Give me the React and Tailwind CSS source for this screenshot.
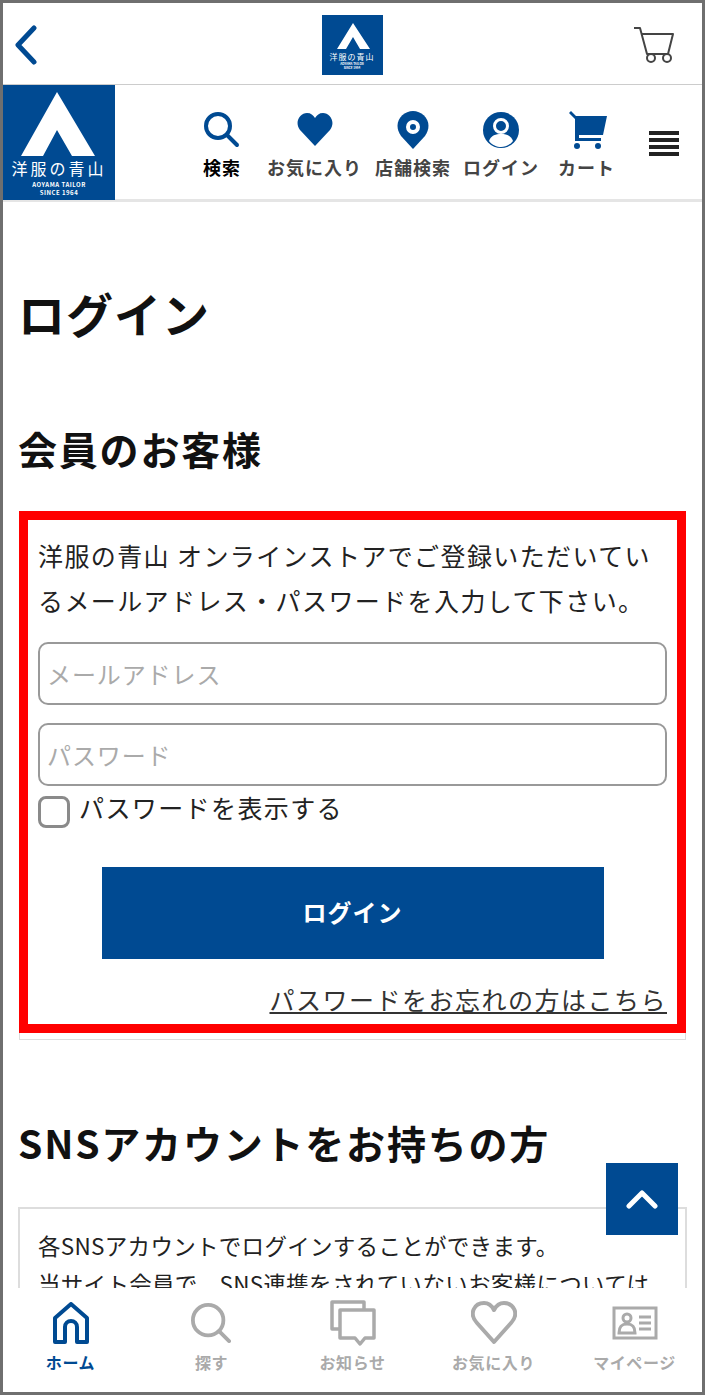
import React from "react";

const font = { fontFamily: '"Noto Sans CJK JP", "Noto Sans", sans-serif' };

function SearchIcon() {
  return (
    <svg width="36" height="36" viewBox="0 0 36 36" fill="none" stroke="#004a92" strokeWidth="4" strokeLinecap="round">
      <circle cx="14" cy="14" r="12" />
      <path d="M23 23l10 10" />
    </svg>
  );
}

function HeartIcon() {
  return (
    <svg width="36" height="34" viewBox="0 0 36 34" fill="#004a92">
      <path d="M18 33L3 17C-3 9 3 0 10 0c4 0 6 2 8 5 2-3 4-5 8-5 7 0 13 9 7 17z" />
    </svg>
  );
}

function PinIcon() {
  return (
    <svg width="32" height="38" viewBox="0 0 32 38">
      <path d="M16 38L4 25C-5 12 5 0 16 0s21 12 12 25z" fill="#004a92" />
      <circle cx="16" cy="16" r="5" fill="none" stroke="#fff" strokeWidth="4" />
    </svg>
  );
}

function UserIcon() {
  return (
    <svg width="36" height="36" viewBox="0 0 36 36">
      <circle cx="18" cy="18" r="18" fill="#004a92" />
      <circle cx="18" cy="14" r="6.5" fill="#004a92" stroke="#fff" strokeWidth="3" />
      <path d="M6 29c2-6 7-7 12-7s10 1 12 7c-3 4-8 6-12 6s-9-2-12-6z" fill="#fff" />
    </svg>
  );
}

function CartIcon() {
  return (
    <svg width="38" height="38" viewBox="0 0 38 38" fill="#004a92" className="ml-[3px]">
      <path d="M0 2l2-2 5 5h31l-4 19H10v3h22v3H6V8z" />
      <circle cx="8" cy="35" r="3" />
      <circle cx="29" cy="35" r="3" />
    </svg>
  );
}

const navItems = [
  { label: "検索", icon: <SearchIcon />, ml: "ml-[88px]", active: true },
  { label: "お気に入り", icon: <HeartIcon />, ml: "ml-[26px]" },
  { label: "店舗検索", icon: <PinIcon />, ml: "ml-[13px]" },
  { label: "ログイン", icon: <UserIcon />, ml: "ml-[12px]" },
  { label: "カート", icon: <CartIcon />, ml: "ml-[19px]" },
];

function BottomIcon({ name, color }) {
  if (name === "home")
    return (
      <svg width="36" height="42" viewBox="0 0 36 42" fill="none" stroke={color} strokeWidth="4" strokeLinejoin="round">
        <path d="M2 16L18 2l16 14v24H24V25a6 6 0 00-12 0v15H2z" />
      </svg>
    );
  if (name === "search")
    return (
      <svg width="40" height="40" viewBox="0 0 42 42" fill="none" stroke={color} strokeWidth="4" strokeLinecap="round" className="-ml-[2px]">
        <circle cx="18" cy="18" r="16" />
        <path d="M30 30l10 10" />
      </svg>
    );
  if (name === "news")
    return (
      <svg width="46" height="46" viewBox="0 0 46 46" fill="none" stroke={color} strokeWidth="3.5" strokeLinejoin="round">
        <path d="M10 29H2V2h32v8" />
        <path d="M10 10h34v28h-9l-5 6-5-6H10z" />
      </svg>
    );
  if (name === "heart")
    return (
      <svg width="46" height="44" viewBox="0 0 46 44" fill="none" stroke={color} strokeWidth="4" strokeLinejoin="round">
        <path d="M23 41L6 22C-3 12 4 2 13 2c5 0 8 3 10 7 2-4 5-7 10-7 9 0 16 10 7 20z" />
      </svg>
    );
  return (
    <svg width="46" height="34" viewBox="0 0 46 34" fill="none" stroke={color} strokeWidth="3">
      <rect x="2" y="2" width="42" height="30" />
      <circle cx="15" cy="12" r="4" />
      <path d="M7 27c0-7 3-9 8-9s8 2 8 9z" />
      <path d="M27 11h12M27 17h12M27 23h12" />
    </svg>
  );
}

const bottomItems = [
  { label: "ホーム", name: "home", active: true },
  { label: "探す", name: "search" },
  { label: "お知らせ", name: "news" },
  { label: "お気に入り", name: "heart" },
  { label: "マイページ", name: "card" },
];

export default function App() {
  return (
    <div style={font} className="relative w-[705px] h-[1395px] overflow-hidden bg-white border-[3px] border-[#6f6f6f] text-[#111]">
      {/* top bar */}
      <div className="flex items-center justify-between h-[82px] border-b border-[#ccc] pt-[2px] pl-[11px] pr-[26px]">
        <svg width="24" height="40" viewBox="0 0 24 40" fill="none" stroke="#004a92" strokeWidth="5" strokeLinecap="round" strokeLinejoin="round">
          <path d="M20 3L4 20l16 17" />
        </svg>
        <div className="relative w-[61px] h-[60px] bg-[#004a92] ml-[34px] overflow-hidden flex flex-col items-center">
          <svg width="61" height="38" viewBox="0 0 61 38" className="shrink-0">
            <polygon points="31,8 48,34 38,34 31,22 24,34 15,34" fill="#fff" />
          </svg>
          <span className="text-[8px] leading-[10px] text-white tracking-[1px] -mt-[1px] whitespace-nowrap">洋服の青山</span>
          <span className="text-[3px] leading-[4px] text-white text-center font-bold">
            AOYAMA TAILOR
            <br />
            SINCE 1964
          </span>
        </div>
        <svg width="44" height="38" viewBox="0 0 44 38" fill="none" stroke="#444" strokeWidth="2" strokeLinejoin="round">
          <path d="M2 2h6l7 26h21l5-20H10" />
          <circle cx="19" cy="32" r="4" />
          <circle cx="35" cy="32" r="4" />
        </svg>
      </div>

      {/* site header */}
      <div className="flex h-[117px] border-b-[3px] border-[#e5e5e5]">
        <div className="relative w-[112px] h-[115px] bg-[#004a92] shrink-0">
          <svg viewBox="0 0 112 115" className="absolute inset-0 w-full h-full">
            <polygon points="54,7 92,71 69,71 54,45 40,71 18,71" fill="#fff" />
          </svg>
          <div className="absolute top-[70px] inset-x-0 text-center text-white text-[16px] leading-[26px] tracking-[3px] whitespace-nowrap">洋服の青山</div>
          <div className="absolute top-[96px] inset-x-0 text-center text-white text-[6px] leading-[8px] font-bold tracking-[0.5px]">
            AOYAMA TAILOR
            <br />
            SINCE 1964
          </div>
        </div>
        {navItems.map((item) => (
          <div key={item.label} className={`${item.ml} flex flex-col items-center pt-[24px]`}>
            <div className="h-[42px] flex items-center">{item.icon}</div>
            <span className={`mt-[3px] text-[18px] leading-[26px] font-bold tracking-[1px] whitespace-nowrap ${item.active ? "text-black" : "text-[#444]"}`}>
              {item.label}
            </span>
          </div>
        ))}
        <div className="ml-[34px] mt-[46px] w-[30px] h-[25px] flex flex-col justify-between">
          <span className="block h-[4px] bg-[#222]" />
          <span className="block h-[4px] bg-[#222]" />
          <span className="block h-[4px] bg-[#222]" />
          <span className="block h-[4px] bg-[#222]" />
        </div>
      </div>

      {/* main */}
      <div className="px-[16px]">
        <h1 className="mt-[78px] text-[47px] leading-[66px] font-bold tracking-[1px] -ml-[1px]">ログイン</h1>
        <h2 className="mt-[74px] text-[39px] leading-[56px] font-bold tracking-[1.8px] -ml-[1px]">会員のお客様</h2>

        <div className="mt-[35px] border border-[#ddd] pb-[6px]">
          <div className="border-[9px] border-[#ff0000] px-[10px] pt-[13px] h-[522px] -mx-px -mt-px">
            <p className="text-[25px] leading-[45px] tracking-[1.4px] text-[#222]">
              洋服の青山 オンラインストアでご登録いただいているメールアドレス・パスワードを入力して下さい。
            </p>
            <input
              type="text"
              placeholder="メールアドレス"
              className="block w-full h-[63px] mt-[19px] px-[7px] border-2 border-[#999] rounded-[10px] text-[24px] tracking-[0.9px] placeholder:text-[#aaa]"
            />
            <input
              type="password"
              placeholder="パスワード"
              className="block w-full h-[63px] mt-[18px] px-[7px] border-2 border-[#999] rounded-[10px] text-[24px] tracking-[0.9px] placeholder:text-[#aaa]"
            />
            <div className="flex items-center mt-[6px] h-[36px]">
              <span className="block w-[32px] h-[32px] mt-[3px] border-[3px] border-[#8a8a8a] rounded-[8px] mr-[9px]" />
              <span className="text-[25px] leading-[30px] tracking-[1.4px] text-[#222] -mt-[6px]">パスワードを表示する</span>
            </div>
            <div className="mt-[39px] mx-auto w-[502px] h-[92px] bg-[#004a92] flex items-center justify-center text-white text-[24px] leading-[30px] font-bold tracking-[1px] pb-[3px]">
              ログイン
            </div>
            <div className="mt-[18px] text-right text-[25px] leading-[44px] tracking-[1.5px] text-[#333] underline">
              パスワードをお忘れの方はこちら
            </div>
          </div>
        </div>

        <h2 className="mt-[74px] text-[39px] leading-[56px] font-bold tracking-[1.8px] -ml-[1px]">SNSアカウントをお持ちの方</h2>

        <div className="mt-[37px] border-2 border-[#ddd] px-[18px] pt-[17px] h-[300px] -mx-[1px]">
          <p className="text-[22.5px] leading-[38px] tracking-[0.3px] text-[#222] whitespace-nowrap">
            各SNSアカウントでログインすることができます。
            <br />
            当サイト会員で、SNS連携をされていないお客様については
          </p>
        </div>
      </div>

      {/* back to top */}
      <div className="absolute left-[603px] top-[1160px] w-[72px] h-[72px] bg-[#004a92] flex items-center justify-center">
        <svg width="32" height="20" viewBox="0 0 32 20" fill="none" stroke="#fff" strokeWidth="5" strokeLinecap="round" strokeLinejoin="round">
          <path d="M3 17L16 4l13 13" />
        </svg>
      </div>

      {/* bottom nav */}
      <div className="absolute -left-[3px] bottom-0 w-[705px] h-[104px] bg-white grid grid-cols-5 pt-[11px]">
        {bottomItems.map((item) => (
          <div key={item.label} className="flex flex-col items-center">
            <div className="h-[48px] flex items-center justify-center">
              <BottomIcon name={item.name} color={item.active ? "#004a92" : "#aaa"} />
            </div>
            <span className={`mt-[3px] text-[16px] leading-[24px] font-bold tracking-[0.6px] whitespace-nowrap ${item.active ? "text-[#004a92]" : "text-[#aaa]"}`}>
              {item.label}
            </span>
          </div>
        ))}
      </div>
    </div>
  );
}
